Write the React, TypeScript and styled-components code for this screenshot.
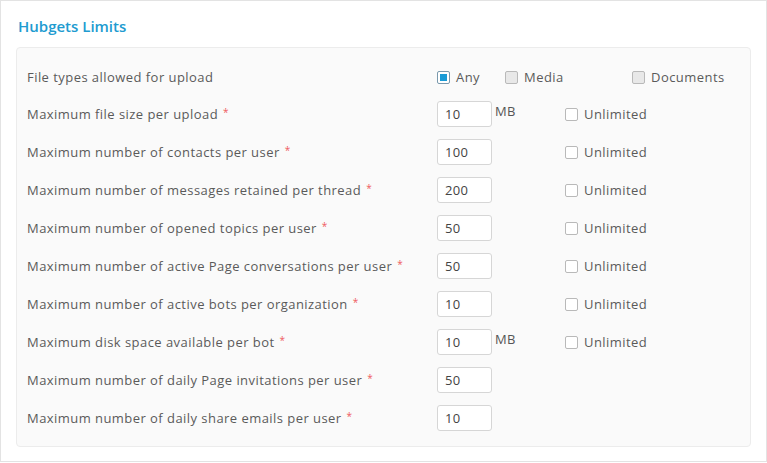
import React from "react";
import styled, { createGlobalStyle } from "styled-components";

const Global = createGlobalStyle`
  html, body { margin: 0; padding: 0; background: #fff; }
  body { font-family: "Open Sans", "Liberation Sans", sans-serif; }
  * { box-sizing: border-box; }
`;

const Frame = styled.div`
  width: 767px;
  height: 462px;
  border: 1px solid #e3e3e3;
  padding: 15px 15px 0 15px;
`;

const Title = styled.h2`
  margin: 0 0 11px 2px;
  font-size: 15px;
  font-weight: 600;
  color: #219bd0;
  line-height: 20px;
`;

const Panel = styled.div`
  background: #fafafa;
  border: 1px solid #ececec;
  border-radius: 4px;
  padding: 17px 10px 15px 10px;
  display: flex;
  flex-direction: column;
  gap: 12px;
`;

const Row = styled.div<{ $h?: number }>`
  display: grid;
  grid-template-columns: 410px 1fr;
  align-items: center;
  height: ${(p) => p.$h ?? 26}px;
`;

const Label = styled.div`
  font-size: 13px;
  letter-spacing: 0.45px;
  color: #5a5a5a;
`;

const Req = styled.span`
  color: #ef5a60;
  font-size: 10px;
  margin-left: 5px;
  vertical-align: top;
  line-height: 14px;
`;

const Controls = styled.div`
  display: flex;
  align-items: center;
`;

const NumInput = styled.div`
  width: 55px;
  height: 26px;
  border: 1px solid #d6d6d6;
  border-radius: 3px;
  background: #fff;
  font-size: 13px;
  color: #444;
  padding: 0 0 0 7px;
  line-height: 24px;
  letter-spacing: 0.3px;
`;

const Unit = styled.span<{ $hidden?: boolean }>`
  width: 73px;
  padding-left: 3px;
  font-size: 13px;
  color: #555;
  align-self: flex-start;
  line-height: 20px;
  letter-spacing: 0.4px;
  visibility: ${(p) => (p.$hidden ? "hidden" : "visible")};
`;

const Check = styled.label<{ $w?: number }>`
  display: flex;
  align-items: center;
  gap: 6px;
  font-size: 13px;
  letter-spacing: 0.45px;
  color: #5a5a5a;
  width: ${(p) => (p.$w ? `${p.$w}px` : "auto")};
`;

const Box = styled.span<{ $checked?: boolean; $disabled?: boolean }>`
  width: 13px;
  height: 13px;
  border-radius: 2px;
  border: 1px solid ${(p) => (p.$checked ? "#7a99ad" : "#b9b9b9")};
  background: ${(p) => (p.$disabled ? "#e8e8e8" : "#fff")};
  display: inline-flex;
  align-items: center;
  justify-content: center;
  flex: none;
  &::after {
    content: "";
    display: ${(p) => (p.$checked ? "block" : "none")};
    width: 7px;
    height: 7px;
    background: #1a9bd6;
  }
`;

type Item = { label: string; value: string; mb?: boolean; unlimited?: boolean };

const items: Item[] = [
  { label: "Maximum file size per upload", value: "10", mb: true, unlimited: true },
  { label: "Maximum number of contacts per user", value: "100", unlimited: true },
  { label: "Maximum number of messages retained per thread", value: "200", unlimited: true },
  { label: "Maximum number of opened topics per user", value: "50", unlimited: true },
  { label: "Maximum number of active Page conversations per user", value: "50", unlimited: true },
  { label: "Maximum number of active bots per organization", value: "10", unlimited: true },
  { label: "Maximum disk space available per bot", value: "10", mb: true, unlimited: true },
  { label: "Maximum number of daily Page invitations per user", value: "50" },
  { label: "Maximum number of daily share emails per user", value: "10" },
];

export default function App() {
  return (
    <>
      <Global />
      <Frame>
        <Title>Hubgets Limits</Title>
        <Panel>
          <Row $h={24}>
            <Label>File types allowed for upload</Label>
            <Controls>
              <Check $w={68}>
                <Box $checked />
                Any
              </Check>
              <Check $w={127}>
                <Box $disabled />
                Media
              </Check>
              <Check>
                <Box $disabled />
                Documents
              </Check>
            </Controls>
          </Row>
          {items.map((it) => (
            <Row key={it.label}>
              <Label>
                {it.label}
                <Req>*</Req>
              </Label>
              <Controls>
                <NumInput>{it.value}</NumInput>
                <Unit $hidden={!it.mb}>MB</Unit>
                {it.unlimited && (
                  <Check>
                    <Box />
                    Unlimited
                  </Check>
                )}
              </Controls>
            </Row>
          ))}
        </Panel>
      </Frame>
    </>
  );
}
